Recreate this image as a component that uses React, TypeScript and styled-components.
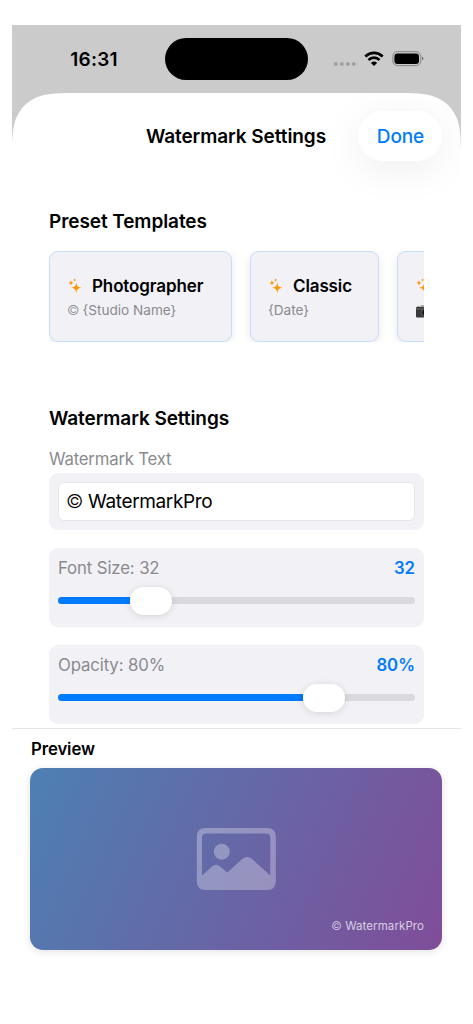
import React from "react";
import styled, { createGlobalStyle } from "styled-components";

const GlobalStyle = createGlobalStyle`
  * { box-sizing: border-box; }
  body {
    margin: 0;
    background: #fff;
    color: #000;
    font-family: Inter, "Liberation Sans", sans-serif;
    -webkit-font-smoothing: antialiased;
  }
`;

const Screen = styled.div`
  width: 449px;
  height: 999px;
  margin: 25px 0 0 12px;
  display: flex;
  flex-direction: column;
  background: #cbcbcb;
  overflow: hidden;
`;

const StatusBar = styled.header`
  height: 68px;
  flex: none;
  display: grid;
  grid-template-columns: 153px 143px 1fr;
`;

const Clock = styled.time`
  padding: 1px 0 0 11px;
  place-self: center;
  font-size: 19px;
  line-height: 24px;
  font-weight: 600;
  letter-spacing: 0.25px;
`;

const Island = styled.div`
  margin-top: 13px;
  height: 42px;
  border-radius: 21px;
  background: #000;
`;

const StatusIcons = styled.div`
  display: flex;
  align-items: flex-start;
  padding: 26px 0 0 25px;
`;

const Sheet = styled.main`
  flex: 1;
  min-height: 0;
  display: flex;
  flex-direction: column;
  background: #fff;
  clip-path: path("M0 57C.3 36 2 27.5 7.5 19C10.5 14 14 10.5 19 7.5C27.5 2 36 .3 57 0H392C413 .3 421.5 2 430 7.5C435 10.5 438.5 14 441.5 19C447 27.5 448.7 36 449 57V931H0Z");
`;

const NavBar = styled.div`
  flex: none;
  height: 86px;
  padding-right: 19px;
  display: grid;
  grid-template-columns: 1fr auto 84px;
  column-gap: 32px;
  align-items: center;
`;

const NavTitle = styled.h1`
  margin: 0;
  padding-top: 2px;
  font-size: 19px;
  line-height: 24px;
  font-weight: 600;
  letter-spacing: -0.08px;
  white-space: nowrap;
`;

const DoneButton = styled.button`
  height: 50px;
  border: 0;
  padding: 2px 0 0 1px;
  border-radius: 25px;
  background: #fff;
  box-shadow: 0 8px 42px rgba(0, 0, 0, 0.07);
  color: #007aff;
  font: 500 19px/24px Inter, "Liberation Sans", sans-serif;
  letter-spacing: -0.1px;
`;

const Scroll = styled.div`
  flex: none;
  height: 549px;
  padding: 31px 37px 0;
  overflow: hidden;
`;

const SectionTitle = styled.h2`
  margin: 0;
  font-size: 19px;
  line-height: 24px;
  font-weight: 600;
  letter-spacing: -0.08px;
`;

const Templates = styled.div`
  display: flex;
  gap: 18px;
  height: 91px;
  margin: 17px 0 65px;
  overflow: hidden;
`;

const TemplateCard = styled.article<{ $width: number }>`
  flex: none;
  width: ${(p) => p.$width}px;
  height: 91px;
  padding: 22px 17px 0 17px;
  border: 1px solid #c5defb;
  border-radius: 9px;
  background: #f2f1f6;
  box-shadow: 0 2px 8px rgba(0, 0, 0, 0.09);
`;

const TemplateName = styled.div`
  display: flex;
  align-items: center;
  gap: 9px;
  height: 24px;
  font-size: 17px;
  line-height: 24px;
  font-weight: 600;
  letter-spacing: -0.12px;
  white-space: nowrap;
`;

const TemplateText = styled.div`
  display: flex;
  align-items: center;
  gap: 3px;
  margin-top: 2px;
  height: 20px;
  font-size: 13.6px;
  line-height: 20px;
  color: #8a8a8e;
  white-space: nowrap;
`;

const Copyright = styled.span`
  font-weight: 300;
`;

const FieldLabel = styled.label`
  display: block;
  margin-top: 18px;
  font-size: 16.75px;
  line-height: 20px;
  letter-spacing: -0.2px;
  color: #8a8a8e;
`;

const Panel = styled.section`
  border-radius: 9px;
  background: #f2f1f6;
`;

const FieldPanel = styled(Panel)`
  height: 57px;
  margin-top: 4px;
  padding: 9px;
`;

const TextField = styled.div`
  height: 39px;
  padding: 0 7px;
  border: 1px solid #e6e5ea;
  border-radius: 6px;
  background: #fff;
  font-size: 19px;
  line-height: 38px;
  letter-spacing: -0.35px;
`;

const SliderPanel = styled(Panel)`
  height: 79px;
  margin-top: 18px;
  padding: 9px;
`;

const SliderHeader = styled.div`
  display: flex;
  justify-content: space-between;
  font-size: 16.75px;
  line-height: 22px;
  color: #8a8a8e;
  letter-spacing: -0.12px;
`;

const SliderValue = styled.span`
  color: #007aff;
  font-weight: 600;
  letter-spacing: 0;
`;

const Track = styled.div`
  display: flex;
  align-items: center;
  height: 7px;
  margin-top: 18px;
  border-radius: 4px;
  background: #dad9de;
`;

const Fill = styled.div`
  height: 7px;
  border-radius: 4px 0 0 4px;
  background: #007aff;
`;

const Thumb = styled.div`
  width: 42px;
  height: 28px;
  flex: none;
  border-radius: 14px;
  background: #fff;
  box-shadow: 0 1px 7px rgba(0, 0, 0, 0.13);
`;

const Preview = styled.section`
  flex: 1;
  padding: 10px 19px 0 18px;
  border-top: 1px solid #e6e6e8;
`;

const PreviewTitle = styled.h3`
  margin: 0;
  padding-left: 1px;
  font-size: 16.75px;
  line-height: 21px;
  font-weight: 600;
  letter-spacing: -0.1px;
`;

const PreviewImage = styled.div`
  height: 182px;
  margin-top: 8px;
  padding: 60px 18px 0;
  display: flex;
  flex-direction: column;
  align-items: center;
  border-radius: 13px;
  background: linear-gradient(113.8deg, #4d80b3, #804d99);
  box-shadow: 0 2px 9px rgba(0, 0, 0, 0.11);
`;

const PreviewMark = styled.span`
  align-self: flex-end;
  margin-top: 28px;
  color: rgba(255, 255, 255, 0.72);
  font-size: 11.5px;
  line-height: 16px;
  letter-spacing: 0.08px;
`;

const Sparkles = () => (
  <svg width="16" height="16" viewBox="0 0 16 16" fill="#ff9500">
    <path d="M9.3 4.5C9.8 8.3 10.6 9.1 14.8 9.8C10.6 10.5 9.8 11.3 9.3 15.4C8.7 11.3 8 10.5 3.8 9.8C8 9.1 8.7 8.3 9.3 4.5Z" />
    <path d="M4 2.1C4.3 4.1 4.8 4.5 6.7 4.9C4.8 5.2 4.3 5.7 4 7.7C3.6 5.7 3.2 5.2 1.2 4.9C3.2 4.5 3.6 4.1 4 2.1Z" />
    <path d="M7.7.3C7.9 1.5 8.2 1.7 9.4 2C8.2 2.2 7.9 2.5 7.7 3.7C7.4 2.5 7.2 2.2 6 2C7.2 1.7 7.4 1.5 7.7.3Z" />
  </svg>
);

const Camera = () => (
  <svg width="18" height="14" viewBox="0 0 18 14" style={{ marginTop: 3 }}>
    <path d="M2 1h3v2H2zM6 0h6l1 3H5z" fill="#aaa" />
    <rect x="1" y="2" width="17" height="10.5" rx="1" fill="#39393b" />
    <path d="M1 4h17" stroke="#666" />
    <circle cx="10.5" cy="7.5" r="4" fill="#151517" stroke="#65656a" />
    <circle cx="10.5" cy="7" r="1.5" fill="#56565e" />
  </svg>
);

const Photo = () => (
  <svg width="80" height="62" viewBox="0 0 80 62" fill="#fff" opacity=".3">
    <path
      fillRule="evenodd"
      d="M9.5 0H71Q79.8 0 79.8 9V53Q79.8 62 71 62H9.5Q.8 62 .8 53V9Q.8 0 9.5 0ZM10.5 5.5Q6 5.5 6 9.5V47.5L16 38.5Q20 35 24 38.5L31.3 44.5L46 31.2Q51.3 26.8 56.3 31.2L74.3 47.5V9.5Q74.3 5.5 70 5.5Z"
    />
    <circle cx="25.8" cy="23.7" r="8" />
  </svg>
);

const Cellular = () => (
  <svg width="24" height="16" viewBox="0 0 24 16" fill="#a2a2a2">
    <circle cx="2.8" cy="12.9" r="2" />
    <circle cx="8.8" cy="12.9" r="2" />
    <circle cx="14.8" cy="12.9" r="2" />
    <circle cx="20.8" cy="12.9" r="2" />
  </svg>
);

const Wifi = () => (
  <svg width="20" height="16" viewBox="0 0 20 16" fill="none" stroke="#000" strokeWidth="2.7" style={{ marginLeft: 7 }}>
    <path d="M1.3 5.5Q5.2 1.9 10 1.9T18.7 5.5" />
    <path d="M4.5 9Q6.8 6.7 10 6.7T15.5 9" />
    <path d="M10 15L6.9 11.9Q10 9.2 13.1 11.9Z" fill="#000" stroke="none" />
  </svg>
);

const Battery = () => (
  <svg width="33" height="16" viewBox="0 0 33 16" style={{ marginLeft: 8 }}>
    <rect x=".8" y=".7" width="28" height="13.9" rx="4.6" fill="none" stroke="#858585" />
    <rect x="2.4" y="2.4" width="24.6" height="10.5" rx="3" />
    <path d="M29.9 5.6Q31.4 6.1 31.4 7.6T29.9 9.6Z" fill="#777" />
  </svg>
);

interface SliderProps {
  label: string;
  value: string;
  offset: number;
}

const Slider = ({ label, value, offset }: SliderProps) => (
  <SliderPanel>
    <SliderHeader>
      <span>{label}</span>
      <SliderValue>{value}</SliderValue>
    </SliderHeader>
    <Track>
      <Fill style={{ width: offset }} />
      <Thumb />
    </Track>
  </SliderPanel>
);

export default function App() {
  return (
    <>
      <GlobalStyle />
      <Screen>
        <StatusBar>
          <Clock>16:31</Clock>
          <Island />
          <StatusIcons>
            <Cellular />
            <Wifi />
            <Battery />
          </StatusIcons>
        </StatusBar>
        <Sheet>
          <NavBar>
            <span />
            <NavTitle>Watermark Settings</NavTitle>
            <DoneButton>Done</DoneButton>
          </NavBar>
          <Scroll>
            <SectionTitle>Preset Templates</SectionTitle>
            <Templates>
              <TemplateCard $width={183}>
                <TemplateName><Sparkles />Photographer</TemplateName>
                <TemplateText><Copyright>©</Copyright>{"{Studio Name}"}</TemplateText>
              </TemplateCard>
              <TemplateCard $width={129}>
                <TemplateName><Sparkles />Classic</TemplateName>
                <TemplateText>{"{Date}"}</TemplateText>
              </TemplateCard>
              <TemplateCard $width={129}>
                <TemplateName><Sparkles /></TemplateName>
                <TemplateText><Camera /></TemplateText>
              </TemplateCard>
            </Templates>
            <SectionTitle>Watermark Settings</SectionTitle>
            <FieldLabel>Watermark Text</FieldLabel>
            <FieldPanel>
              <TextField><Copyright>©</Copyright> WatermarkPro</TextField>
            </FieldPanel>
            <Slider label="Font Size: 32" value="32" offset={72} />
            <Slider label="Opacity: 80%" value="80%" offset={245} />
          </Scroll>
          <Preview>
            <PreviewTitle>Preview</PreviewTitle>
            <PreviewImage>
              <Photo />
              <PreviewMark><Copyright>©</Copyright> WatermarkPro</PreviewMark>
            </PreviewImage>
          </Preview>
        </Sheet>
      </Screen>
    </>
  );
}
